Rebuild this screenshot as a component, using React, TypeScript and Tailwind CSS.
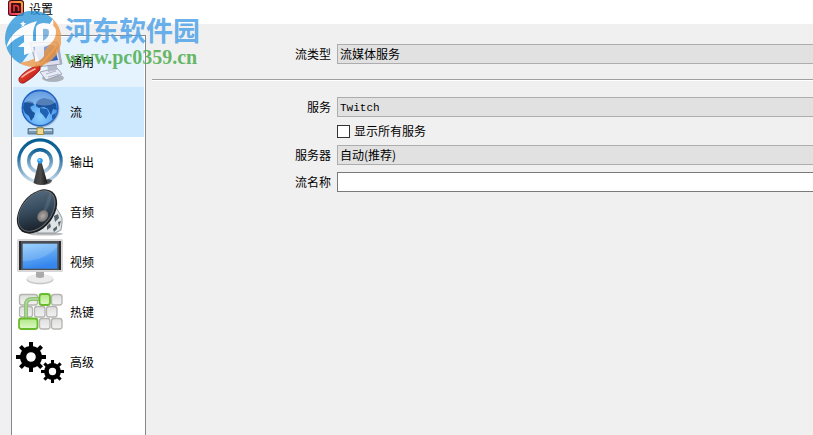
import { useState } from 'react'
import type { ReactNode } from 'react'

function GeneralIcon() {
  return (
    <svg viewBox="0 0 48 48" className="size-12 shrink-0">
      <defs>
        <linearGradient id="genScreen" x1="0" y1="0" x2="1" y2="1">
          <stop offset="0" stopColor="#a9c4ec" />
          <stop offset="1" stopColor="#1d4fb4" />
        </linearGradient>
        <linearGradient id="genHandle" x1="0" y1="0" x2="1" y2="1">
          <stop offset="0" stopColor="#ff5a45" />
          <stop offset="1" stopColor="#a80c08" />
        </linearGradient>
      </defs>
      <ellipse cx="37" cy="40" rx="11" ry="4" fill="#85878f" opacity="0.6" />
      <path d="M24 34l17-4 5 6-16 6z" fill="#e9ebf4" stroke="#8f93a3" strokeWidth="0.8" />
      <path d="M30 36l10-3M32 39l11-3" stroke="#aab4cf" strokeWidth="1" />
      <path d="M31 25h10v7l-9 2z" fill="#b4b9c9" />
      <path d="M14 5l27-1 5 22-25 3z" fill="#dde0ec" stroke="#8d91a6" strokeWidth="0.8" />
      <path d="M40 4l3 2 3 19-2 2z" fill="#a9adbd" />
      <path d="M17 8l21-1 4 15-18 3z" fill="url(#genScreen)" />
      <path d="M40 10L23 29" stroke="#b56d34" strokeWidth="3.2" strokeLinecap="round" />
      <path d="M40 9L24 27" stroke="#ecc89c" strokeWidth="1.2" />
      <path d="M3 40Q9 32 20 28q5-1 4 4-7 8-16 13-6 1-5-5z" fill="url(#genHandle)" stroke="#8a0d0a" strokeWidth="0.7" />
      <path d="M6 39q6-5 13-8" stroke="#ffb5a6" strokeWidth="1.6" fill="none" strokeLinecap="round" />
    </svg>
  )
}

function StreamIcon() {
  return (
    <svg viewBox="0 0 48 48" className="size-12 shrink-0">
      <defs>
        <radialGradient id="globeSea" cx="0.5" cy="0.75" r="0.75">
          <stop offset="0" stopColor="#8fd2ff" />
          <stop offset="0.55" stopColor="#56a2f0" />
          <stop offset="1" stopColor="#3478d0" />
        </radialGradient>
      </defs>
      <circle cx="25" cy="21" r="18.5" fill="#7f8ea2" opacity="0.55" />
      <circle cx="24" cy="20" r="17.8" fill="url(#globeSea)" stroke="#1f62c4" strokeWidth="1.4" />
      <path d="M8 15l4-2 5 1 1 3-4 2 2 4 3 2-1 4-3 4-2-5-4-3-2-5z" fill="#1b559f" />
      <path d="M20 15q2-4 8-5l8 2 4 4 1 6-4-1-2 6-3-6-4-2-5 1-3-2z" fill="#1b559f" />
      <path d="M24 20l7 1 2 4-3 6-3-4-3-3zM36 27l4-2-1 5-3 1z" fill="#2062b4" />
      <path d="M8 14Q12 4 24 3.500T40 14Q33 19 24 17T8 14z" fill="#fff" opacity="0.25" />
      <path d="M21 39h6v4h-6z" fill="#87a9c6" stroke="#4b6b8a" strokeWidth="0.6" />
      <path d="M12 40.500h25v5.500H12z" fill="#7897b2" stroke="#476682" strokeWidth="0.8" />
      <path d="M13 41.500h23V43H13z" fill="#c4dcec" />
      <path d="M21 40h6.500v6.500H21z" fill="#efd795" stroke="#a5842b" strokeWidth="0.9" />
    </svg>
  )
}

function OutputIcon() {
  return (
    <svg viewBox="0 0 48 48" className="size-12 shrink-0">
      <defs>
        <linearGradient id="waves" gradientUnits="userSpaceOnUse" x1="0" y1="0" x2="0" y2="46">
          <stop offset="0" stopColor="#045a92" />
          <stop offset="0.4" stopColor="#1c6a9e" />
          <stop offset="1" stopColor="#dbe9f2" />
        </linearGradient>
        <linearGradient id="wavesInner" gradientUnits="userSpaceOnUse" x1="0" y1="10" x2="0" y2="36">
          <stop offset="0" stopColor="#045a92" />
          <stop offset="1" stopColor="#c3dae9" />
        </linearGradient>
        <linearGradient id="mast" x1="0" y1="0" x2="1" y2="0">
          <stop offset="0" stopColor="#3a3a3a" />
          <stop offset="0.5" stopColor="#4c4c4c" />
          <stop offset="1" stopColor="#161616" />
        </linearGradient>
      </defs>
      <circle cx="24" cy="23" r="21.200" fill="none" stroke="url(#waves)" strokeWidth="3.200" />
      <circle cx="24" cy="23" r="11.300" fill="none" stroke="url(#wavesInner)" strokeWidth="3.400" />
      <path d="M24 46l8-5 4 1q0 4-8 5z" fill="#222" opacity="0.75" />
      <path d="M22.500 24h3l6 21q-7 4-14 0z" fill="url(#mast)" />
      <circle cx="24" cy="22.700" r="2.800" fill="#2b9df0" />
      <circle cx="23.400" cy="22" r="1.100" fill="#9bd8ff" />
    </svg>
  )
}

function AudioIcon() {
  return (
    <svg viewBox="0 0 48 48" className="size-12 shrink-0">
      <defs>
        <linearGradient id="cone" x1="0" y1="0" x2="0.8" y2="1">
          <stop offset="0" stopColor="#5c7386" />
          <stop offset="0.55" stopColor="#34485a" />
          <stop offset="1" stopColor="#161d24" />
        </linearGradient>
        <radialGradient id="cap">
          <stop offset="0" stopColor="#b0adab" />
          <stop offset="1" stopColor="#75726f" />
        </radialGradient>
      </defs>
      <ellipse cx="30" cy="46" rx="17" ry="1.600" fill="#777" opacity="0.5" />
      <path d="M39 18l5 8q3 4 2 9l-1 7-6 3-18 0-2-6z" fill="#dfe4e6" stroke="#7d868b" strokeWidth="0.8" />
      <path d="M38 28l4-2 1 4-4 4zM31 38l3-3 1 4-4 3zM42 34l3-1-2 6zM37 41l4-3v3l-3 3z" fill="#55626a" />
      <ellipse cx="21" cy="23.500" rx="16.500" ry="25" transform="rotate(38 21 23.500)" fill="#1b1d20" />
      <ellipse cx="20.700" cy="23" rx="15.200" ry="23.600" transform="rotate(38 20.700 23)" fill="#6a7177" />
      <ellipse cx="20.500" cy="23" rx="14.400" ry="22.600" transform="rotate(38 20.500 23)" fill="url(#cone)" />
      <path d="M26 26L34 4q4 5-4 19z" fill="#93a4af" opacity="0.2" />
      <ellipse cx="26.700" cy="28" rx="5" ry="6.200" transform="rotate(38 26.700 28)" fill="url(#cap)" />
    </svg>
  )
}

function VideoIcon() {
  return (
    <svg viewBox="0 0 48 48" className="size-12 shrink-0">
      <defs>
        <linearGradient id="display" x1="0" y1="0" x2="0.3" y2="1">
          <stop offset="0" stopColor="#8ccbfa" />
          <stop offset="1" stopColor="#3486ee" />
        </linearGradient>
      </defs>
      <ellipse cx="24" cy="41.500" rx="13.500" ry="5" fill="#c9c9c9" />
      <ellipse cx="24" cy="40.500" rx="13" ry="4.200" fill="#ececec" />
      <path d="M20 34h8v5q-4 2-8 0z" fill="#aaa" />
      <rect x="1" y="1" width="46" height="33" rx="1.500" fill="#d8d8d8" />
      <rect x="3" y="3" width="42" height="29" fill="#4b4e54" />
      <path d="M3 3h2v29H3zM43 3h2v29h-2z" fill="#2a2c30" />
      <rect x="6.700" y="5.700" width="34.600" height="25" fill="url(#display)" />
      <path d="M6.700 5.700h34.600v3Q29 23 6.700 23z" fill="#fff" opacity="0.15" />
    </svg>
  )
}

const KEYS = [
  { x: 3.5, y: 6.5, w: 18 },
  { x: 35.5, y: 6.5, w: 10.5 },
  { x: 3.5, y: 18.5, w: 13 },
  { x: 18.5, y: 18.5, w: 10.5 },
  { x: 30.5, y: 18.5, w: 10.5 },
  { x: 23.5, y: 30.5, w: 10.5 },
  { x: 35.5, y: 30.5, w: 10.5 },
]

function HotkeysIcon() {
  return (
    <svg viewBox="0 0 48 48" className="size-12 shrink-0">
      <defs>
        <linearGradient id="keycap" x1="0" y1="0" x2="0" y2="1">
          <stop offset="0" stopColor="#dedede" />
          <stop offset="1" stopColor="#f2f2f2" />
        </linearGradient>
        <linearGradient id="keyGreen" x1="0" y1="0" x2="0" y2="1">
          <stop offset="0" stopColor="#b0e886" />
          <stop offset="1" stopColor="#dff8c8" />
        </linearGradient>
      </defs>
      {KEYS.map(k => (
        <rect key={`${k.x}-${k.y}`} x={k.x} y={k.y} width={k.w} height="10.5" rx="2.5" fill="url(#keycap)" stroke="#b4b4b0" strokeWidth="1.3" />
      ))}
      <path d="M10 31V17q0-6 6-6h7" fill="none" stroke="#8fc274" strokeWidth="4" />
      <path d="M10 31V17q0-6 6-6h7" fill="none" stroke="#b5d9a0" strokeWidth="1.500" />
      <rect x="23.500" y="6" width="10.500" height="11" rx="2.500" fill="url(#keyGreen)" stroke="#6abb2c" strokeWidth="1.800" />
      <rect x="3" y="30.500" width="18.500" height="10.500" rx="2.500" fill="url(#keyGreen)" stroke="#6abb2c" strokeWidth="1.800" />
    </svg>
  )
}

const TEETH = [0, 45, 90, 135, 180, 225, 270, 315]

function Gear({ cx, cy, r }: { cx: number; cy: number; r: number }) {
  return (
    <g transform={`translate(${cx} ${cy}) scale(${r / 15})`}>
      {TEETH.map(a => (
        <rect key={a} x="-2" y="-15" width="4" height="7" transform={`rotate(${a})`} fill="#000" />
      ))}
      <circle r="7.900" fill="none" stroke="#000" strokeWidth="6.200" />
    </g>
  )
}

function AdvancedIcon() {
  return (
    <svg viewBox="0 0 48 48" className="size-12 shrink-0">
      <Gear cx={15} cy={19} r={15} />
      <Gear cx={36.5} cy={33.5} r={11.5} />
    </svg>
  )
}

function AppIcon() {
  return (
    <svg viewBox="0 0 16 16" className="size-4 shrink-0">
      <defs>
        <linearGradient id="appRim" x1="0" y1="1" x2="1" y2="0">
          <stop offset="0" stopColor="#f0325a" />
          <stop offset="1" stopColor="#ffa03c" />
        </linearGradient>
      </defs>
      <rect width="16" height="16" rx="3" fill="#3a0d12" />
      <path d="M3.500 2h9A1.500 1.500 0 0114 3.500v9a1.500 1.500 0 01-1.500 1.500h-9A1.500 1.500 0 012 12.500v-9A1.500 1.500 0 013.500 2z" fill="none" stroke="url(#appRim)" strokeWidth="2.200" />
      <path d="M6 11.500V5.500h2q2.500 0 2.500 2.500v3" fill="none" stroke="#f0383c" strokeWidth="1.600" />
    </svg>
  )
}

function Watermark() {
  return (
    <div className="pointer-events-none absolute left-[5px] top-[11px] flex items-start gap-1" aria-hidden="true">
      <svg viewBox="0 0 56 56" className="size-14 shrink-0 opacity-80">
        <path d="M0 28A28 28 0 0148 8L40 20 30 34 16 53A28 28 0 010 28z" fill="#2f98dc" />
        <path d="M48 8A28 28 0 0114 52Q31 50 41 38q9-12 7-30z" fill="#ee9a48" />
        <path d="M1 37Q6 17 32 10q-4 7-4 14v17l-9 3V24Q9 27 1 37z" fill="#fff" />
        <path d="M30 51V36H13q5-5 9-6h9V17q0-4 7-5 12 0 13 8 0 12-12 16v9q-3 5-9 6z" fill="#fff" />
        <path d="M38 18q6-1 6 3 0 6-6 9z" fill="#6ba9dc" />
        <path d="M18 10l1 2h2l-2 2 1 2-2-1-2 1 1-2-2-2h2z" fill="#fff" />
      </svg>
      <div className="flex flex-col whitespace-nowrap pt-[3px]">
        <span className="font-['Noto_Sans_CJK_SC',sans-serif] text-[27px] font-bold leading-[31px] text-[#4fa3e8]/85">河东软件园</span>
        <span className="font-['Liberation_Serif',serif] text-[20px] font-bold leading-[24px] text-[#4cac4c]/85">www.pc0359.cn</span>
      </div>
    </div>
  )
}

const PAGES: { id: string; label: string; icon: ReactNode }[] = [
  { id: 'general', label: '通用', icon: <GeneralIcon /> },
  { id: 'stream', label: '流', icon: <StreamIcon /> },
  { id: 'output', label: '输出', icon: <OutputIcon /> },
  { id: 'audio', label: '音频', icon: <AudioIcon /> },
  { id: 'video', label: '视频', icon: <VideoIcon /> },
  { id: 'hotkeys', label: '热键', icon: <HotkeysIcon /> },
  { id: 'advanced', label: '高级', icon: <AdvancedIcon /> },
]

const labelClass = 'text-right'
const selectClass = 'h-5 w-full appearance-none rounded-none border border-r-0 border-[#adadad] bg-[#e1e1e1] pl-[2px] outline-none'

export default function App() {
  const [current, setCurrent] = useState('stream')
  const [showAll, setShowAll] = useState(false)
  const [streamKey, setStreamKey] = useState('')

  return (
    <div className="relative flex min-h-screen flex-col bg-[#f0f0f0] font-['Noto_Sans_CJK_SC',sans-serif] text-[12px] leading-[18px] text-black">
      <header className="flex h-6 items-start gap-[5px] bg-white pl-2">
        <AppIcon />
        <h1>设置</h1>
      </header>

      <div className="flex flex-1">
        <nav className="ml-[11px] mt-[11px] w-[135px] shrink-0 border border-b-0 border-[#828790] bg-white p-px">
          {PAGES.map(p => (
            <button
              key={p.id}
              onClick={() => setCurrent(p.id)}
              className={`flex h-[50px] w-full items-center gap-[6px] pl-[3px] text-left ${
                current === p.id ? 'bg-[#cce8ff]' : p.id === 'general' ? 'bg-[#e5f3ff]' : 'hover:bg-[#e5f3ff]'
              }`}
            >
              {p.icon}
              <span>{p.label}</span>
            </button>
          ))}
        </nav>

        <main className="min-w-0 flex-1 pl-[6px] pt-5">
          <div className="grid grid-cols-[179px_1fr] items-center gap-x-[6px]">
            <label htmlFor="type" className={labelClass}>流类型</label>
            <select id="type" className={selectClass}>
              <option>流媒体服务</option>
            </select>
          </div>

          <hr className="mb-4 mt-[15px] h-[2px] border-t border-[#a0a0a0] bg-white" />

          <div className="grid grid-cols-[179px_1fr] items-center gap-x-[6px] gap-y-[7px]">
            <label htmlFor="service" className={labelClass}>服务</label>
            <select id="service" className={`${selectClass} pt-px font-['Liberation_Mono',monospace] text-[11px]`}>
              <option>Twitch</option>
            </select>

            <div className="col-start-2 flex h-[14px] items-center gap-1">
              <input
                id="all"
                type="checkbox"
                checked={showAll}
                onChange={e => setShowAll(e.target.checked)}
                className="size-[13px] appearance-none border border-[#333333] bg-white checked:bg-[#333333]"
              />
              <label htmlFor="all">显示所有服务</label>
            </div>

            <label htmlFor="server" className={labelClass}>服务器</label>
            <select id="server" className={selectClass}>
              <option>自动(推荐)</option>
            </select>

            <label htmlFor="key" className={labelClass}>流名称</label>
            <input
              id="key"
              type="text"
              value={streamKey}
              onChange={e => setStreamKey(e.target.value)}
              className="h-5 w-full border border-r-0 border-[#7a7a7a] bg-white px-[3px] outline-none"
            />
          </div>
        </main>
      </div>

      <Watermark />
    </div>
  )
}
